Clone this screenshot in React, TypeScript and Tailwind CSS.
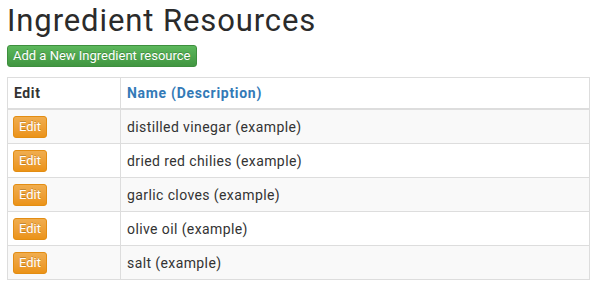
import React from "react";

const items = [
  "distilled vinegar (example)",
  "dried red chilies (example)",
  "garlic cloves (example)",
  "olive oil (example)",
  "salt (example)",
];

export default function App() {
  return (
    <div
      className="min-h-screen bg-white px-[7px] pt-[3px] text-[#333]"
      style={{ fontFamily: "Roboto, 'Noto Sans', sans-serif" }}
    >
      <h1 className="text-[31px] leading-[36px] font-normal tracking-[0.9px] text-[#2b2b2b]">
        Ingredient Resources
      </h1>

      <button className="mt-[6px] h-[22px] rounded-[3px] border border-[#3e8f3e] bg-gradient-to-b from-[#5cb85c] to-[#419641] px-[5px] text-[13px] leading-[20px] text-white [text-shadow:0_-1px_0_rgba(0,0,0,0.2)]">
        Add a New Ingredient resource
      </button>

      <table className="mt-[10px] w-[583px] border-collapse text-[14px]">
        <thead>
          <tr className="bg-white">
            <th className="w-[113px] border border-b-2 border-[#ddd] px-[6px] py-[5px] text-left font-bold leading-[20px] tracking-[0.6px] text-[#333]">
              Edit
            </th>
            <th className="border border-b-2 border-[#ddd] px-[6px] py-[5px] text-left font-bold leading-[20px] tracking-[0.7px] text-[#337ab7]">
              Name (Description)
            </th>
          </tr>
        </thead>
        <tbody>
          {items.map((name, i) => (
            <tr key={name} className={i % 2 === 0 ? "bg-[#f9f9f9]" : "bg-white"}>
              <td className="border border-[#ddd] px-[5px] pt-[6px] pb-[5px] align-middle">
                <button className="block h-[22px] w-[34px] rounded-[3px] border border-[#e38d13] bg-gradient-to-b from-[#f0ad4e] to-[#eb9316] text-[13px] leading-[20px] text-white [text-shadow:0_-1px_0_rgba(0,0,0,0.2)]">
                  Edit
                </button>
              </td>
              <td className="border border-[#ddd] px-[6px] pt-[6px] pb-[5px] align-middle leading-[22px] tracking-[0.4px] text-[#333]">
                {name}
              </td>
            </tr>
          ))}
        </tbody>
      </table>
    </div>
  );
}
